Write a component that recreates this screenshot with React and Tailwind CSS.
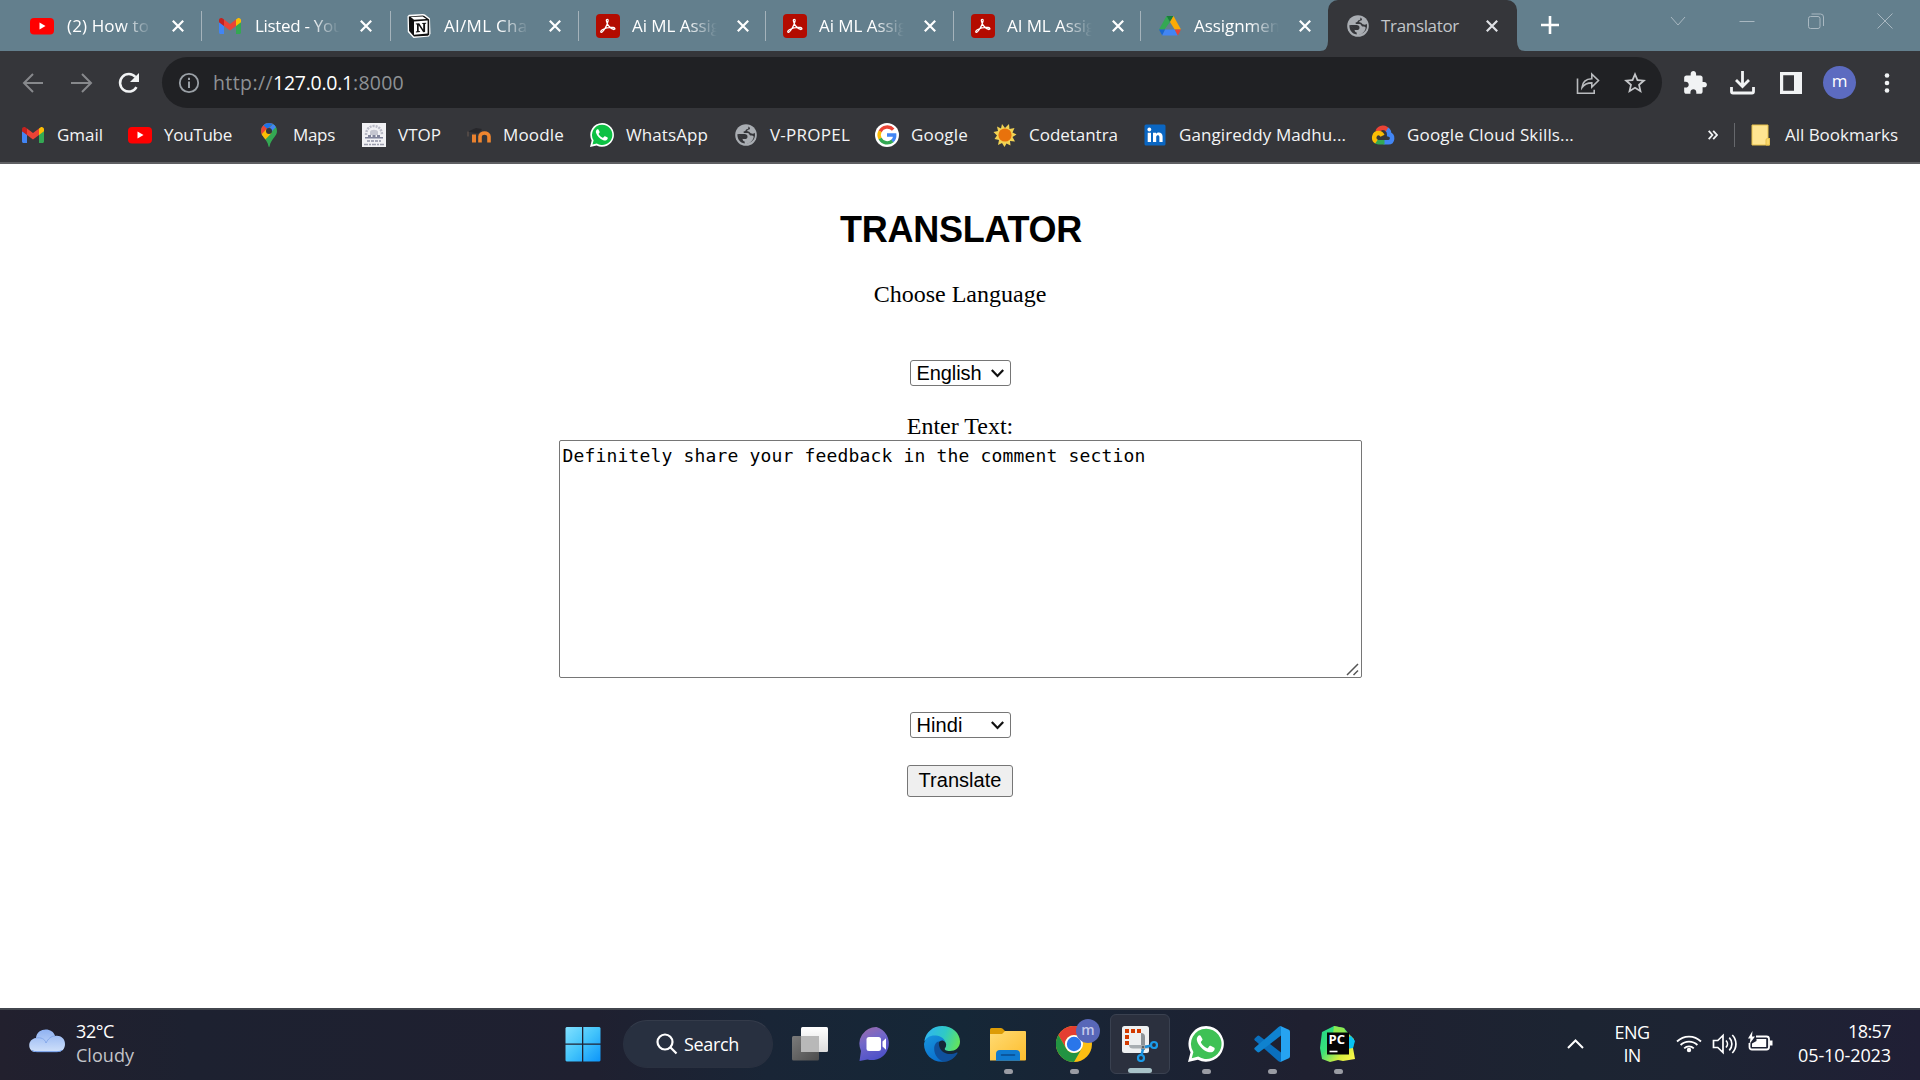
import React, { useLayoutEffect, useRef, useState } from 'react';

/* Text set to an exact width by evenly adjusting its tracking. */
function Fit({ w, className = '', children }) {
  const ref = useRef(null);
  const [ls, setLs] = useState(0);
  useLayoutEffect(() => {
    const el = ref.current;
    el.style.letterSpacing = '0px';
    const natural = el.getBoundingClientRect().width;
    const v = (w - natural) / Math.max(1, el.textContent.length);
    el.style.letterSpacing = v + 'px';
    setLs(v);
  }, [w, children]);
  return (
    <span ref={ref} className={'inline-block whitespace-pre ' + className} style={{ letterSpacing: ls + 'px' }}>
      {children}
    </span>
  );
}

const YouTube = () => (
  <svg width="24" height="24" viewBox="0 0 24 24">
    <rect y="4" width="24" height="16.500" rx="4" fill="#f00" />
    <path d="M9.500 8.600v7l6-3.500z" fill="#fff" />
  </svg>
);

const Gmail = () => (
  <svg width="24" height="24" viewBox="0 0 24 24">
    <path d="M1 8v10.500c0 .8.7 1.500 1.500 1.500H6v-9z" fill="#4285f4" />
    <path d="M18 20h3.500c.8 0 1.500-.7 1.500-1.500V8l-5 3z" fill="#34a853" />
    <path d="M18 5.500V12l5-3.700V6.300c0-1.900-2.100-3-3.600-1.800z" fill="#fbbc04" />
    <path d="M6 12V5.500l6 4.500 6-4.500V12l-6 4.500z" fill="#ea4335" />
    <path d="M1 6.300v2L6 12V5.500L4.600 4.500C3.100 3.400 1 4.400 1 6.300z" fill="#c5221f" />
  </svg>
);

const Notion = () => (
  <svg width="24" height="24" viewBox="0 0 24 24">
    <path d="M.5 2.200L2 .8l14-.8 2 .6 5 3.800.5 15.400-1.500 2.700L6.500 24 .8 18z" fill="#fff" />
    <path d="M1.800 2.500L15.800 1.500l1.500.4 4.900 3.500v14.800l-1.200 1.600L7 22.600 2.100 17z" fill="#111" />
    <path d="M3.800 3.100l11.900-.7 3.500 2.500L7 5.700z" fill="#fff" />
    <path d="M7 7.500l13.600-.9v13L7 20.700z" fill="#fff" />
    <path d="M8.800 9.400l3.400-.2 4 6.200v-5.500l-1.300-.3V8.900l4.300-.2v.8l-1.100.4v8.200l-1.900.1-4.500-6.900v5.700l1.400.3v.8l-4.200.3v-.8l1.100-.4v-6.700l-1.200-.3z" fill="#111" />
  </svg>
);

const Acrobat = () => (
  <svg width="24" height="24" viewBox="0 0 24 24">
    <rect width="24" height="24" rx="4" fill="#b30b00" />
    <path
      d="M5.500 18.300c1.600-.4 5.800-6.600 6.600-11.400.3-2.100-2-2.200-1.700 0 .5 4.100 5 8.600 7.500 8.600 1.600-.1 1.300-1.800-.6-2-3.200-.3-8 .6-11 2.300-1.900 1.100-2 2.700-.8 2.500z"
      fill="none" stroke="#fff" strokeWidth="1.300" strokeLinejoin="round"
    />
  </svg>
);

const Drive = () => (
  <svg width="24" height="24" viewBox="0 0 24 24">
    <path d="M8.500 2L12 8 6.500 15.500H1z" fill="#34a853" />
    <path d="M8.500 2h7l-3.500 6z" fill="#188038" />
    <path d="M15.500 2L12 8l4.700 7.500H23z" fill="#fbab04" />
    <path d="M1 15.500h6.200l-3 6z" fill="#1967d2" />
    <path d="M7.200 15.500h9.500l3 6H4.200z" fill="#4285f4" />
    <path d="M16.700 15.500H23l-3.200 6z" fill="#ea4335" />
  </svg>
);

const Globe = ({ bg }) => (
  <svg width="24" height="24" viewBox="0 0 24 24">
    <circle cx="12" cy="12" r="10.800" fill="#a9adb2" />
    <path d="M14 3.600c1 1.300.2 2.600-1.200 2.700-1.200 0-.8 1.800-2.200 1.900-1.700 0-1.200 1.700-.2 1.900h3.400c1.800.1 1.300 2.300 2.600 2.500 1.500.1 3.500-.1 3.200 1.700-.6 3.300-3.400 5.800-6.800 6.200 4.800-.7 8.200-4.200 8.200-8.500 0-.8-.1-1.600-.3-2.300-.7.900-1.900 1-3 .9-1.700-.1-1.900-2-3.400-2-1.400-.1-1.300-1.700-.1-1.800 1.800-.1 2.300-1.600 1.200-2.600z" fill={bg} />
    <path d="M3.500 11c-.6 4.700 2.600 8.800 7.200 9.500v-2.100c-1.100-.1-2.100-1-2.100-2.200v-1z" fill={bg} />
    <path d="M3.500 11l5 5h2.200c1.700 0 2.800-.8 2.800-2.300 0-1.800-1.200-2.700-3-2.700z" fill={bg} />
  </svg>
);

const MapsPin = () => (
  <svg width="24" height="24" viewBox="0 0 24 24">
    <defs>
      <clipPath id="pin"><path d="M12 0a8 8 0 0 0-8 8c0 2.500 1 4 2.500 6 2.500 3.300 4.300 5.500 4.900 9 .1 1.200 1.100 1.200 1.300 0 .6-3.500 2.300-5.700 4.800-9C19 12 20 10.500 20 8a8 8 0 0 0-8-8z" /></clipPath>
    </defs>
    <g clipPath="url(#pin)">
      <path d="M0 0h24v24H0z" fill="#34a853" />
      <path d="M0 19L20 -4H0z" fill="#ea4335" />
      <path d="M6 2L10.500 6 17 0H6z" fill="#1a73e8" />
      <path d="M17 0L10 8l3 2 7-7z" fill="#4285f4" />
      <path d="M3 13l6.500-7 5 4L6 19z" fill="#fbbc04" />
    </g>
    <circle cx="12" cy="8" r="3" fill="#35363a" />
  </svg>
);

const Vtop = () => (
  <svg width="24" height="24" viewBox="0 0 24 24">
    <rect width="24" height="24" fill="#f1f1f4" />
    <path d="M4 12c0-5 3-9 8-9s8 4 8 9" fill="none" stroke="#b9bac6" strokeWidth="2.500" strokeDasharray="2 1" />
    <path d="M8 9c0-3 8-3 8 0v3H8z" fill="#c5c6d0" />
    <path d="M3 14h3v-2h3v2h1.500v-2h3v2H15v-2h3v2h3v1.500H3z" fill="#80839a" />
    <path d="M5 18h14" stroke="#a7a9b8" strokeWidth="2" strokeDasharray="3 1" />
    <path d="M2 21.500h20" stroke="#9a9cab" strokeWidth="1.600" strokeDasharray="4 1 2 1" />
  </svg>
);

const Moodle = () => (
  <svg width="24" height="24" viewBox="0 0 24 24">
    <path d="M5 19.500v-8h4v8z" fill="#e9812e" />
    <path d="M13 19.500v-6c0-4.700 9-4.700 9 0v6" fill="none" stroke="#f0862f" strokeWidth="3.600" />
    <path d="M1 8.500l8-3.500 6 1-4 4.500z" fill="#27272b" />
    <path d="M1 8.500v5" stroke="#6d5a50" strokeWidth="1" />
  </svg>
);

const WhatsApp = ({ size = 24, green = '#0dc143' }) => (
  <svg width={size} height={size} viewBox="0 0 24 24">
    <path d="M12.100 0A11.900 11.900 0 0 0 1.700 17.500L0 24l6.600-1.500A11.900 11.900 0 1 0 12.100 0z" fill="#fff" />
    <path d="M12.100 1.800A10.100 10.100 0 0 0 3.600 17.300L2.500 21.500l4.300-1.100A10.100 10.100 0 1 0 12.100 1.800z" fill={green} />
    <path d="M8.400 6.500c-.3-.5-1-.5-1.500 0-1 1-1.300 2.200-.8 3.600 1 2.900 3.700 5.900 7.200 7.200 1.800.6 3.300.1 4.100-1 .4-.7.500-1.500.2-1.800l-2.500-1.300c-.3-.1-.6 0-.8.2l-1 1.200c-.2.2-.5.3-.8.1-1.700-.8-2.900-1.900-3.800-3.500-.2-.3-.1-.5.1-.8l.8-1c.1-.3.1-.5 0-.7z" fill="#fff" />
  </svg>
);

const Google = () => (
  <svg width="24" height="24" viewBox="0 0 24 24">
    <circle cx="12" cy="12" r="12" fill="#fff" />
    <g fill="none" strokeWidth="3.400">
      <path d="M18.200 6.600A8 8 0 0 0 5.100 8.500" stroke="#ea4335" />
      <path d="M5.100 8.200a8 8 0 0 0 0 7.600" stroke="#fbbc05" />
      <path d="M5.100 15.500a8 8 0 0 0 12.400 2.400" stroke="#34a853" />
      <path d="M17.300 18.100A7.500 7.500 0 0 0 19.700 12H12" stroke="#4285f4" />
    </g>
  </svg>
);

const Codetantra = () => (
  <svg width="24" height="24" viewBox="0 0 24 24">
    <path d="M9 1l3 4 4-4 .5 5 5-1-2 4.500 4 2-4 2.500 2.500 4.500-5-.5.5 4.500-4-2-2 3.500-2.500-4-4 2 1-5-4.500-1 2.500-3.500L.5 9l4.500-1-1-4.500L8 5.500z" fill="#f2d353" />
    <circle cx="12" cy="12" r="6.600" fill="#e8720c" />
  </svg>
);

const LinkedIn = () => (
  <svg width="24" height="24" viewBox="0 0 24 24">
    <rect x="1.500" y="1.500" width="21" height="21" rx="1.500" fill="#0a66c2" />
    <circle cx="6.300" cy="6.500" r="1.900" fill="#fff" />
    <path d="M4.700 9.700H8V19H4.700zM10 9.700h3V11c1.500-2.300 6.600-2.100 6.600 2.600V19h-3.200v-4.800c0-2.600-3.200-2.400-3.200 0V19H10z" fill="#fff" />
  </svg>
);

const Cloud = () => (
  <svg width="24" height="24" viewBox="0 0 24 24" fill="none" strokeWidth="4.500">
    <path d="M6.500 8.500C8.500 4 14.500 3.300 17.300 8.200" stroke="#ea4335" />
    <path d="M16 6.500c2.500 1.500 2.200 4.500 2.200 5 4.300 1 3.700 7.700-.7 7.700H12.500" stroke="#4285f4" />
    <path d="M13.500 19.200H7.500c-1 0-2-.3-2.800-.9" stroke="#34a853" />
    <path d="M5.500 18.700c-4-2.700-2.300-8.700 2-8.700 2.300 0 3.300 1.300 4 2.800" stroke="#fbbc05" />
  </svg>
);

const TABS = [
  ['(2) How to', 82, YouTube, 'w-[188px]', 'w-[85px]'],
  ['Listed - You', 88, Gmail, 'w-[189px]', 'w-[85px]'],
  ['AI/ML Chal', 88, Notion, 'w-[188px]', 'w-[85px]'],
  ['Ai ML Assig', 88, Acrobat, 'w-[187px]', 'w-[85px]'],
  ['Ai ML Assig', 88, Acrobat, 'w-[188px]', 'w-[85px]'],
  ['AI ML Assig', 88, Acrobat, 'w-[187px]', 'w-[85px]'],
  ['Assignmen', 86, Drive, 'w-[186px]', 'w-[85px]'],
];

const BOOKMARKS = [
  ['Gmail', 46, Gmail, 'w-[107px]'],
  ['YouTube', 68, YouTube, 'w-[129px]'],
  ['Maps', 42, MapsPin, 'w-[105px]'],
  ['VTOP', 43, Vtop, 'w-[105px]'],
  ['Moodle', 61, Moodle, 'w-[123px]'],
  ['WhatsApp', 82, WhatsApp, 'w-[144px]'],
  ['V-PROPEL', 80, Globe, 'w-[141px]'],
  ['Google', 57, Google, 'w-[118px]'],
  ['Codetantra', 89, Codetantra, 'w-[150px]'],
  ['Gangireddy Madhu...', 167, LinkedIn, 'w-[228px]'],
  ['Google Cloud Skills...', 167, Cloud, 'w-[220px]'],
];

const CloseX = ({ color = '#fff' }) => (
  <svg width="12" height="12" viewBox="0 0 12 12" className="shrink-0">
    <path d="M.8.8l10.400 10.400M11.200.8L.8 11.200" stroke={color} strokeWidth="2.200" />
  </svg>
);

function TabStrip() {
  return (
    <div className="flex h-[51px] bg-[#637f8d] pl-[14px]">
      {TABS.map(([label, w, Icon, width, textWidth], i) => (
        <div key={i} className={'flex h-[51px] shrink-0 items-center ' + width}>
          <div className={'shrink-0 ' + (i > 2 ? 'ml-[17px]' : 'ml-4')}><Icon /></div>
          <div className={'overflow-hidden text-[17px] leading-[26px] text-white [mask-image:linear-gradient(to_right,#000_65%,transparent_100%)] ' + textWidth + (i > 2 ? ' ml-3' : ' ml-[13px]')}>
            <Fit w={w}>{label}</Fit>
          </div>
          <div className="ml-[20px]"><CloseX /></div>
          {i < 6 && <div className="ml-auto h-[30px] w-[1.500px] bg-[#a5b3bb]" />}
        </div>
      ))}
      <div className="relative ml-[1px] flex h-[51px] w-[189px] shrink-0 items-center rounded-t-[10px] bg-[#35363a]">
        <svg className="absolute bottom-0 -left-[8px]" width="8" height="10"><path d="M8 0v10H0q8 0 8-10z" fill="#35363a" /></svg>
        <svg className="absolute bottom-0 -right-[8px]" width="8" height="10"><path d="M0 0v10h8q-8 0-8-10z" fill="#35363a" /></svg>
        <div className="ml-[18px]"><Globe bg="#35363a" /></div>
        <div className="ml-[11px] w-[85px] text-[17px] leading-[26px] text-[#c3c6ca]"><Fit w={78}>Translator</Fit></div>
        <div className="ml-[20px]"><CloseX color="#dfe1e5" /></div>
      </div>
      <svg className="mt-4 ml-6" width="18" height="18" viewBox="0 0 18 18"><path d="M9 0v18M0 9h18" stroke="#fff" strokeWidth="2.600" /></svg>
      <div className="mt-[13px] mr-[27px] ml-auto flex items-start gap-[53px] text-[#a9b8c1]">
        <svg width="16" height="16" fill="none" stroke="currentColor" strokeWidth="1"><path d="M1 4l7 8 7-8" /></svg>
        <svg width="16" height="16" fill="none" stroke="currentColor" strokeWidth="1"><path d="M.5 8.500h15" /></svg>
        <svg width="16" height="16" fill="none" stroke="currentColor" strokeWidth="1"><rect x=".5" y="3.500" width="11.500" height="12" rx="2" /><path d="M3.500 1h9q3 0 3 3v9" /></svg>
        <svg width="16" height="16" fill="none" stroke="currentColor" strokeWidth="1"><path d="M.5.5l15 15M15.500.5l-15 15" /></svg>
      </div>
    </div>
  );
}

function Toolbar() {
  return (
    <div className="flex h-[63px] items-center pl-[22px]">
      <svg width="22" height="20" viewBox="0 0 22 20" fill="none" stroke="#87898c" strokeWidth="2"><path d="M21 10H2M11 1l-9 9 9 9" /></svg>
      <svg className="ml-[27px]" width="22" height="20" viewBox="0 0 22 20" fill="none" stroke="#87898c" strokeWidth="2"><path d="M0 10h19M11 1l9 9-9 9" /></svg>
      <svg className="ml-[25px]" width="22" height="22" viewBox="0 0 22 22">
        <path d="M18.500 15.200A8.800 8.800 0 1 1 17.500 5" fill="none" stroke="#f1f3f4" strokeWidth="2.500" />
        <path d="M21 1v9h-9z" fill="#f1f3f4" />
      </svg>
      <div className="ml-[22px] flex h-[51px] w-[1500px] shrink-0 items-center rounded-full bg-[#202124] pl-[16px]">
        <svg width="22" height="22" viewBox="0 0 22 22"><circle cx="11" cy="11" r="9.200" fill="none" stroke="#9aa0a6" strokeWidth="1.800" /><path d="M11 9.500V16M11 5.800V8" stroke="#9aa0a6" strokeWidth="2" /></svg>
        <div className="ml-[13px] text-[19.500px] leading-[28px] text-[#8e9195]">
          <Fit w={60}>http://</Fit><Fit w={80} className="text-white">127.0.0.1</Fit><Fit w={51}>:8000</Fit>
        </div>
        <svg className="ml-auto" width="24" height="24" viewBox="0 0 24 24" fill="none" stroke="#b9bbbe" strokeWidth="1.600">
          <path d="M1.500 7.500v14.700h16.700v-3.500" />
          <path d="M6 16.500c.5-5.500 4-8.500 9.800-8.700V3.200L22.500 9.500l-6.700 6.600v-4.200c-4.500 0-7.500 1.300-9.800 4.600z" />
        </svg>
        <svg className="mr-[16px] ml-[24px]" width="22" height="22" viewBox="2 2 20 20" fill="#c4c6c9"><path d="m22 9.240-7.190-.62L12 2 9.190 8.630 2 9.240l5.460 4.730L5.820 21 12 17.270 18.180 21l-1.630-7.030zM12 15.400l-3.760 2.270 1-4.280-3.320-2.880 4.380-.38L12 6.100l1.710 4.040 4.380.38-3.320 2.880 1 4.280z" /></svg>
      </div>
      <svg className="ml-[20px]" width="26" height="26" viewBox="0 0 24 24" fill="#f1f3f4"><path d="M20.500 11H19V7c0-1.100-.9-2-2-2h-4V3.500C13 2.120 11.880 1 10.500 1S8 2.120 8 3.500V5H4c-1.100 0-1.990.9-1.990 2v3.800H3.500c1.490 0 2.700 1.210 2.700 2.700s-1.210 2.700-2.700 2.700H2V20c0 1.100.9 2 2 2h3.800v-1.500c0-1.490 1.210-2.700 2.700-2.700 1.490 0 2.700 1.210 2.700 2.700V22H17c1.100 0 2-.9 2-2v-4h1.500c1.380 0 2.500-1.120 2.500-2.500S21.880 11 20.500 11z" /></svg>
      <svg className="ml-[22px]" width="25" height="25" viewBox="0 0 25 25" fill="none" stroke="#f1f3f4" strokeWidth="2.800"><path d="M12.500 1v15M6 10l6.500 6.500L19 10M1.500 17v4.500q0 1.500 1.500 1.500h19q1.500 0 1.500-1.500V17" /></svg>
      <svg className="ml-[25px]" width="22" height="22" viewBox="0 0 22 22"><path fillRule="evenodd" d="M0 0h22v22H0zM3.200 3.200v15.600H14V3.200z" fill="#f1f3f4" /></svg>
      <div className="ml-[21px] flex size-[33px] items-center justify-center rounded-full bg-[#5c6bc0] pb-[4px] text-[17px] leading-none text-white">m</div>
      <svg className="ml-[28px]" width="6" height="20" fill="#f1f3f4"><circle cx="3" cy="2.500" r="2.300" /><circle cx="3" cy="10" r="2.300" /><circle cx="3" cy="17.500" r="2.300" /></svg>
    </div>
  );
}

function Bookmarks() {
  return (
    <div className="flex h-[48px] items-center pb-[6px] pl-[21px] text-[17px] leading-[26px] text-[#f3f4f5]">
      {BOOKMARKS.map(([label, w, Icon, cls]) => (
        <div key={label} className={'flex shrink-0 items-center gap-3 ' + cls}>
          <div className="w-6 shrink-0"><Icon bg="#35363a" /></div>
          <Fit w={w}>{label}</Fit>
        </div>
      ))}
      <svg className="ml-[117px]" width="10" height="10" viewBox="0 0 10 10" fill="none" stroke="#f1f3f4" strokeWidth="1.800"><path d="M.7.8L4.400 5 .7 9.200M5.200.8L9 5 5.200 9.200" /></svg>
      <div className="ml-4 h-6 w-px bg-[#66686c]" />
      <svg className="ml-4" width="20" height="22" viewBox="0 0 20 22"><path d="M1 1h16v13.500h1.500V21H1z" fill="#ffe591" stroke="#e8c14b" /><path d="M15 21v-5q0-1.500 1.500-1.500h2V21z" fill="#f8d76b" stroke="#e8c14b" /></svg>
      <div className="ml-[14px]"><Fit w={113}>All Bookmarks</Fit></div>
    </div>
  );
}

const Select = ({ children }) => (
  <div className="flex h-[26px] w-[101px] items-center justify-between rounded-[3px] border border-[#767676] bg-white pr-[6px] pl-[6px] font-['Liberation_Sans',Arial,sans-serif] text-[20px] leading-[23px] text-black">
    <Fit w={children === 'English' ? 65 : 46}>{children}</Fit>
    <svg width="13" height="9" viewBox="0 0 13 9" fill="none" stroke="#111" strokeWidth="2.200"><path d="M.8 1l5.700 6 5.700-6" /></svg>
  </div>
);

function Page() {
  return (
    <main className="flex h-[844px] flex-col items-center bg-white font-['Liberation_Serif','Times_New_Roman',serif] text-[24px] leading-[28px] text-black">
      <h2 className="mt-[45px] pl-[2px] font-['Liberation_Sans',Arial,sans-serif] text-[36px] leading-[42px] font-bold"><Fit w={242}>TRANSLATOR</Fit></h2>
      <p className="mt-[29px]">Choose Language</p>
      <div className="mt-[52px]"><Select>English</Select></div>
      <p className="mt-[26px]">Enter Text:</p>
      <div className="relative h-[238px] w-[803px] rounded-[2px] border border-[#767676] bg-white pt-[3px] pl-[3px] font-['DejaVu_Sans_Mono',monospace] text-[18px] leading-[24px]">
        <Fit w={583}>Definitely share your feedback in the comment section</Fit>
        <svg className="absolute right-[2px] bottom-[1px]" width="13" height="13" stroke="#555" strokeWidth="1.500"><path d="M1 12L12 1M7.500 12L12 7.500" /></svg>
      </div>
      <div className="mt-[34px]"><Select>Hindi</Select></div>
      <button className="mt-[27px] h-[32px] w-[106px] rounded-[3px] border border-[#767676] bg-[#efefef] pb-[2px] font-['Liberation_Sans',Arial,sans-serif] text-[20px] leading-[26px]"><Fit w={83}>Translate</Fit></button>
    </main>
  );
}

const Start = () => (
  <svg width="36" height="36" viewBox="0 0 36 36">
    <defs><linearGradient id="win" x1="0" y1="0" x2="36" y2="36" gradientUnits="userSpaceOnUse"><stop stopColor="#85e2ff" /><stop offset=".5" stopColor="#43c4fb" /><stop offset="1" stopColor="#0a93fa" /></linearGradient></defs>
    <path d="M1.500 1H17v16.500H.5V2zM18.300 1H34.500l1 1v15.500H18.300zM.5 18.800H17V35.500H1.500l-1-1zM18.300 18.800h17.200v15.700l-1 1H18.300z" fill="url(#win)" />
  </svg>
);

const TaskView = () => (
  <svg width="36" height="36" viewBox="0 0 36 36">
    <defs>
      <linearGradient id="tv1" x2="0" y2="1"><stop stopColor="#fff" /><stop offset="1" stopColor="#dcdcdc" /></linearGradient>
      <linearGradient id="tv2" x2="1" y2="1"><stop stopColor="#7b7b7b" /><stop offset="1" stopColor="#4c4c4c" /></linearGradient>
    </defs>
    <rect y="10" width="27" height="24.500" rx="1.500" fill="url(#tv2)" />
    <rect x="9" y="1" width="27" height="25" rx="1.500" fill="url(#tv1)" />
    <path d="M9 10h18v16H9z" fill="#b8b8b8" />
  </svg>
);

const Chat = () => (
  <svg width="36" height="36" viewBox="0 0 36 36">
    <defs><linearGradient id="chat" x2=".4" y2="1"><stop stopColor="#a06aa8" /><stop offset=".45" stopColor="#7468c8" /><stop offset="1" stopColor="#4f52c9" /></linearGradient></defs>
    <path d="M18.500 1A16.800 16.800 0 0 0 3 25L1.500 35l8-1.500A16.800 16.800 0 1 0 18.500 1z" fill="url(#chat)" />
    <rect x="8.500" y="11" width="14.500" height="14" rx="2.500" fill="#fff" />
    <path d="M24.500 15.500l3.500-3.300v11.600l-3.500-3.300z" fill="#fff" />
  </svg>
);

const Edge = () => (
  <svg width="36" height="36" viewBox="0 0 36 36">
    <defs>
      <linearGradient id="e1" x1="0" y1="8" x2="36" y2="22" gradientUnits="userSpaceOnUse"><stop stopColor="#2fb4f2" /><stop offset=".5" stopColor="#2fc9c6" /><stop offset="1" stopColor="#6be84c" /></linearGradient>
      <linearGradient id="e2" x2=".6" y2="1"><stop stopColor="#1795dd" /><stop offset="1" stopColor="#0a6fce" /></linearGradient>
    </defs>
    <path d="M.3 15C2 6 9 0 18 0c10.500 0 18 7.500 18 15.500C36 22 31 25 26 25c-4 0-6-1.300-5-2.800 1.800-2.400 1.500-5.200-.5-7C17 11.500 7 10 .3 15z" fill="url(#e1)" />
    <path d="M0 18C1 11 7 9 12 9.500c5 .5 8.500 3.500 9.500 6.500-2.500-2.500-6-1.700-7.200 1-2.800 6.500 1.700 15.500 9.200 18C11 38.500 0 30 0 18z" fill="url(#e2)" />
    <path d="M14.800 15.500c-2 0-4.300 2.500-4.600 6.500C9.800 29 15 36 22 35.600c5-.6 9-4 11.500-8.300.3-.6-.3-1-.9-.7-8 3.800-15.800 0-17.300-6-.5-2-.4-3.500-.5-5.100z" fill="#0f509c" />
  </svg>
);

const Explorer = () => (
  <svg width="36" height="36" viewBox="0 0 36 36">
    <defs><linearGradient id="fold" x2="1" y2="1"><stop stopColor="#ffdb74" /><stop offset="1" stopColor="#fdbd2d" /></linearGradient></defs>
    <path d="M0 3.500Q0 2 1.500 2H11q1.500 0 2.500 1.500L15 5v5H0z" fill="#dd9c06" />
    <path d="M0 8h12l3-3h20q1 0 1 1v27.500q0 1-1 1H0z" fill="url(#fold)" />
    <path d="M6 34.700V28q0-4 4-4h16q4 0 4 4v6.700z" fill="#0f7ad0" />
    <path d="M11.500 29h13" stroke="#0a4b8c" strokeWidth="1.600" strokeLinecap="round" />
  </svg>
);

const Chrome = () => (
  <span className="relative block">
    <svg width="36" height="36" viewBox="0 0 36 36">
      <circle cx="18" cy="18" r="18" fill="#fcbf12" />
      <path d="M2.400 9A18 18 0 0 1 33.600 9H18a9 9 0 0 0-7.800 13.500z" fill="#e43e31" />
      <path d="M2.400 9A18 18 0 0 0 18 36l7.800-13.500a9 9 0 0 1-15.600 0z" fill="#229342" />
      <circle cx="18" cy="18" r="9" fill="#fff" /><circle cx="18" cy="18" r="7.200" fill="#2a76ea" />
    </svg>
    <span className="absolute -top-[7px] left-[20px] flex size-6 items-center justify-center rounded-full bg-[#5867b8] pb-[3px] text-[14px] leading-none font-semibold text-[#c3c9ec]">m</span>
  </span>
);

const Snip = () => (
  <svg width="36" height="36" viewBox="0 0 36 36">
    <rect width="27" height="27" rx="2.500" fill="#eef0f1" />
    <path d="M3 3h4v4H3zM9 3h4v4H9zM15 3h4v4h-4zM3 9h4v4H3zM3 15h4v4H3z" fill="#d33a00" />
    <path d="M19 7q4 0 4 4v13h-4z" fill="#8d9398" /><path d="M7 19h20v3.500H11q-4 0-4-3.500z" fill="#a8aeb2" />
    <circle cx="21" cy="21" r="1.300" fill="#5b6166" />
    <path d="M21 23l-1.500 6M23 21l6-1.500" stroke="#1b8fdc" strokeWidth="2.500" />
    <circle cx="19" cy="32" r="3" fill="none" stroke="#1b9be8" strokeWidth="2.200" />
    <circle cx="32" cy="19" r="3" fill="none" stroke="#1b9be8" strokeWidth="2.200" />
  </svg>
);

const VSCode = () => (
  <svg width="36" height="36" viewBox="0 0 36 36">
    <path d="M.7 12.500L3.300 10q1-.8 2.200 0L27 26.500V36q-1.500 0-2.500-.8L.7 14.200q-.8-.9 0-1.700z" fill="#0a6fbd" />
    <path d="M.7 23.500L3.300 26q1 .8 2.200 0L27 9.500V0q-1.200 0-2.500 1L.7 21.800q-.8.9 0 1.700z" fill="#0f82cf" />
    <path d="M26.500 0L34.800 3.800q1.200.6 1.200 2v24.400q0 1.400-1.200 2L26.500 36q.5-.5.5-2V2q0-1.500-.5-2z" fill="#26a3f1" />
  </svg>
);

const PyCharm = () => (
  <svg width="36" height="36" viewBox="0 0 36 36">
    <defs><linearGradient id="py" x1="0" y1="0" x2="36" y2="30" gradientUnits="userSpaceOnUse"><stop stopColor="#21d789" /><stop offset=".4" stopColor="#38df7a" /><stop offset=".75" stopColor="#d5ee3e" /><stop offset="1" stopColor="#fcf84a" /></linearGradient></defs>
    <path d="M2 6L14 0l10 2 4 5 6 6-1 9 2 11-12 2-5-1-8 2-8-3L0 22z" fill="url(#py)" />
    <path d="M27 12l4-2 4 5-2 7-6 1z" fill="#07c3f2" />
    <path d="M14 0l10 2 3 8-14-2z" fill="#8fe84f" />
    <rect x="7" y="6.500" width="22" height="22" fill="#050505" />
    <text x="8.500" y="17.700" fontSize="11.500" fontWeight="700" fill="#fff" fontFamily="Open Sans, sans-serif" textLength="16.500" lengthAdjust="spacingAndGlyphs">PC</text>
    <path d="M9.500 25.500h8" stroke="#fff" strokeWidth="1.600" />
  </svg>
);

const Slot = ({ children, active, dot }) => (
  <div className={'relative flex h-[60px] w-[60px] shrink-0 items-center justify-center ' + (active ? 'rounded-[6px] border border-[#3a4150] bg-[#2b303e]' : '')}>
    {children}
    {dot && <span className={'absolute bottom-0 h-[5px] rounded-full ' + (active ? 'w-6 bg-[#a9c3c9]' : 'w-[9px] bg-[#9a9ca4]')} />}
  </div>
);

function Taskbar() {
  return (
    <footer className="flex h-[72px] border-t-2 border-[#42464e] bg-[linear-gradient(90deg,#22202e_0%,#1d2130_10%,#1f2030_31%,#192536_40%,#152737_50%,#192435_57%,#1f2030_68%,#1c2432_82%,#1d2433_88%,#201f35_100%)] text-[18px] leading-[24px] text-white">
      <div className="flex w-[553px] pl-[29px]">
        <svg className="mt-[19px]" width="36" height="24" viewBox="0 0 36 24">
          <defs><linearGradient id="cl" x2="0" y2="1"><stop stopColor="#8fb2f2" /><stop offset="1" stopColor="#cfe0fa" /></linearGradient></defs>
          <path d="M7 9C8-2 24-2 26 7c5-1 10 2 10 8 0 5-3 8-8 8H7c-9 0-9-13 0-14z" fill="url(#cl)" />
          <path d="M7 9c5-1 9 1 10 5 2-4 5-7 9-7" fill="none" stroke="#83a7ea" strokeWidth="1" />
          <path d="M3 21.500q2 1.200 5 1.200h20q3 0 5-1.500" fill="none" stroke="#6f9be8" strokeWidth="1" />
        </svg>
        <div className="mt-[9px] ml-[11px] flex flex-col items-start">
          <Fit w={38}>32°C</Fit>
          <Fit w={58} className="text-[#c3c4c9]">Cloudy</Fit>
        </div>
      </div>
      <div className="mt-1 flex">
        <Slot><Start /></Slot>
        <div className="mt-[6px] mr-[7px] ml-[10px] flex h-12 w-[150px] items-center rounded-full border border-[#2a3140] border-t-[#343b4a] bg-[#283040] pl-[32px]">
          <svg width="22" height="22" viewBox="0 0 22 22" fill="none" stroke="#fff" strokeWidth="2.200"><circle cx="9" cy="9" r="7.500" /><path d="M14.300 14.300L20.500 20.500" /></svg>
          <Fit w={55} className="ml-[6px]">Search</Fit>
        </div>
        <div className="flex gap-[6px]">
          <Slot><TaskView /></Slot>
          <Slot><Chat /></Slot>
          <Slot><Edge /></Slot>
          <Slot dot><Explorer /></Slot>
          <Slot dot><Chrome /></Slot>
          <Slot dot active><Snip /></Slot>
          <Slot dot><WhatsApp size={36} green="#3ec155" /></Slot>
          <Slot dot><VSCode /></Slot>
          <Slot dot><PyCharm /></Slot>
        </div>
      </div>
      <div className="mr-[29px] ml-auto flex">
        <svg className="mt-[29px]" width="17" height="10" viewBox="0 0 17 10" fill="none" stroke="#fff" strokeWidth="2"><path d="M1 9l7.500-7.500L16 9" /></svg>
        <div className="mt-[11px] ml-[31px] flex w-[34px] flex-col items-center leading-[23px]">
          <Fit w={35}>ENG</Fit>
          <Fit w={17}>IN</Fit>
        </div>
        <svg className="mt-[23px] ml-[27px]" width="26" height="20" viewBox="0 0 26 20" fill="none" stroke="#fff" strokeWidth="1.800">
          <path d="M1 8.500a17 17 0 0 1 24 0M4.600 12a12 12 0 0 1 16.800 0M8.200 15.300a7 7 0 0 1 9.600 0" /><circle cx="13" cy="17" r="2.200" fill="#fff" stroke="none" />
        </svg>
        <svg className="mt-[23px] ml-[10px]" width="26" height="22" viewBox="0 0 26 22" fill="none" stroke="#fff" strokeWidth="1.700">
          <path d="M1.500 7.500h4.300L11 2.500v17l-5.200-5H1.500zM14 7.500a5 5 0 0 1 0 7M17.300 4.700a9 9 0 0 1 0 12.600M20.300 2a13 13 0 0 1 0 18" />
        </svg>
        <svg className="mt-[21px] ml-[10px]" width="25" height="22" viewBox="0 0 25 22">
          <path d="M8 5.500h10.500q2.500 0 2.500 2.500v8q0 2.500-2.500 2.500H4q-2.500 0-2.500-2.500v-4" fill="none" stroke="#fff" strokeWidth="1.800" />
          <path d="M8.500 8h9.700v8H4v-3.500L8.500 10zM21.500 9.500h3v5h-3zM4.500 0L0 7.500h2.500L1.500 13 7 5.500H4z" fill="#fff" />
        </svg>
        <div className="mt-[9px] ml-[25px] flex w-[93px] flex-col items-end">
          <Fit w={43}>18:57</Fit>
          <Fit w={93}>05-10-2023</Fit>
        </div>
      </div>
    </footer>
  );
}

export default function App() {
  return (
    <div className="flex h-[1080px] w-[1920px] flex-col overflow-hidden bg-white font-['Open_Sans','Noto_Sans',sans-serif]">
      <header className="h-[164px] border-b-2 border-[#5f6063] bg-[#35363a]">
        <TabStrip />
        <Toolbar />
        <Bookmarks />
      </header>
      <Page />
      <Taskbar />
    </div>
  );
}
